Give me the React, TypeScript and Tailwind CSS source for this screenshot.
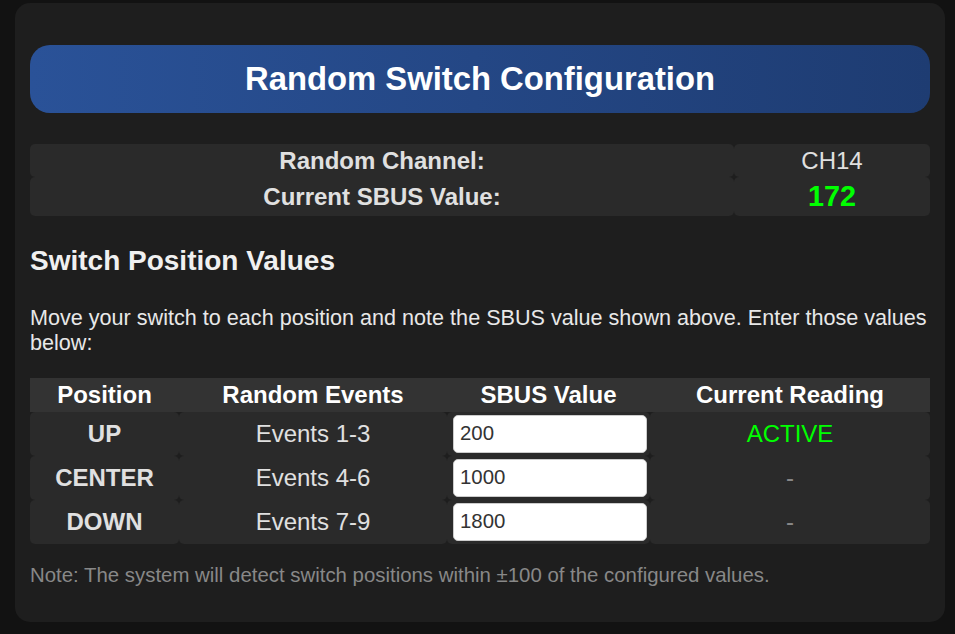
import { useState } from 'react'

type PositionRow = {
  name: string
  events: string
  value: string
  reading: string
  active: boolean
}

const rows: PositionRow[] = [
  { name: 'UP', events: 'Events 1-3', value: '200', reading: 'ACTIVE', active: true },
  { name: 'CENTER', events: 'Events 4-6', value: '1000', reading: '-', active: false },
  { name: 'DOWN', events: 'Events 7-9', value: '1800', reading: '-', active: false }
]

const cols = 'grid grid-cols-[149px_268px_203px_280px]'
const cell = 'flex items-center justify-center rounded-[5px] bg-[#2a2a2a] py-[3px]'

function ValueRow ({ row, onChange }: Readonly<{ row: PositionRow, onChange: (v: string) => void }>) {
  return (
    <div className={cols}>
      <div className={`${cell} font-bold text-[#e0e0e0]`}>{row.name}</div>
      <div className={`${cell} text-[#e0e0e0]`}>{row.events}</div>
      <div className="flex items-center rounded-[5px] bg-[#2a2a2a] py-[3px] pl-[6px]">
        <input
          type="number"
          value={row.value}
          onChange={(e) => { onChange(e.target.value) }}
          className="h-[38px] w-[194px] rounded-[5px] border border-[#ccc] bg-white px-[6px] text-[20.4px] text-[#333] outline-none [appearance:textfield] [&::-webkit-inner-spin-button]:appearance-none"
        />
      </div>
      <div className={row.active ? `${cell} text-[#00ff00]` : `${cell} text-[#888]`}>
        {row.reading}
      </div>
    </div>
  )
}

export default function App () {
  const [values, setValues] = useState(rows.map(r => r.value))

  return (
    <div className="min-h-screen bg-[#121212] pl-[15px] pr-[10px] pt-[3px] font-['Liberation_Sans',Arial,sans-serif] text-[24px] leading-[1.149]">
      <div className="rounded-[15px] bg-[#1e1e1e] px-[15px] pb-[35px] pt-[42px]">
        <div className="rounded-[20px] bg-linear-to-r from-[#2a5298] to-[#1e3c72] py-[15px] text-center text-[32.8px] font-bold text-white">
          Random Switch Configuration
        </div>

        <div className="mt-[31px] grid grid-cols-[704px_196px]">
          <div className={`${cell} font-bold text-[#e0e0e0]`}>Random Channel:</div>
          <div className={`${cell} text-[#e0e0e0]`}>CH14</div>
          <div className={`${cell} font-bold text-[#e0e0e0]`}>Current SBUS Value:</div>
          <div className={`${cell} text-[28.8px] font-bold text-[#00ff00]`}>172</div>
        </div>

        <h3 className="mt-[29px] text-[28px] font-bold text-[#f0f0f0]">Switch Position Values</h3>

        <p className="mt-[29px] text-[21.6px] text-[#e8e8e8]">
          Move your switch to each position and note the SBUS value shown above. Enter those values below:
        </p>

        <div className="mt-[22px] flex flex-col">
          <div className={`${cols} bg-[#333] py-[3px] text-center font-bold text-white`}>
            <div>Position</div>
            <div>Random Events</div>
            <div>SBUS Value</div>
            <div>Current Reading</div>
          </div>
          {rows.map((row, i) => (
            <ValueRow
              key={row.name}
              row={{ ...row, value: values[i] }}
              onChange={(v) => { setValues(values.map((old, j) => (j === i ? v : old))) }}
            />
          ))}
        </div>

        <p className="mt-[20px] text-[20.4px] text-[#888]">
          Note: The system will detect switch positions within ±100 of the configured values.
        </p>
      </div>
    </div>
  )
}
